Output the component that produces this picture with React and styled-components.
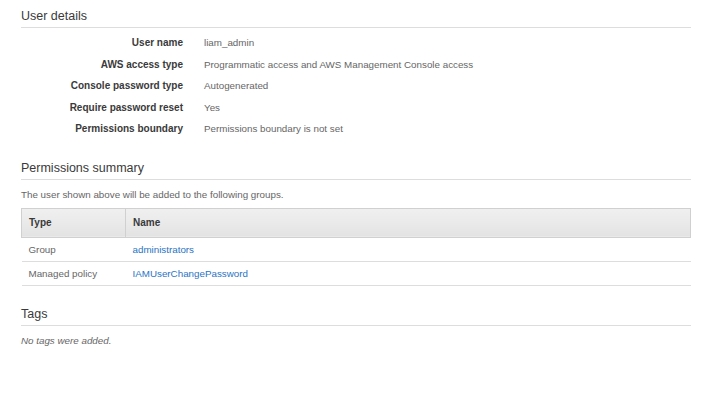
import React from 'react';
import styled, { createGlobalStyle } from 'styled-components';

const GlobalStyle = createGlobalStyle`
  body {
    margin: 0;
    background: #ffffff;
    font-family: 'Liberation Sans', Arial, sans-serif;
    color: #444;
  }
`;

const Page = styled.div`
  width: 670px;
  padding: 6px 0 0 21px;
`;

const Section = styled.section`
  margin-top: ${props => props.gap || 0}px;
`;

const Heading = styled.h2`
  margin: 0;
  font-size: 12.5px;
  font-weight: normal;
  line-height: 20px;
  color: #3a3a3a;
  padding-bottom: 1px;
  border-bottom: 1px solid #dddddd;
`;

const DetailList = styled.div`
  display: grid;
  grid-template-columns: 162px 1fr;
  column-gap: 21px;
  margin-top: 4px;
`;

const Label = styled.div`
  text-align: right;
  font-size: 10px;
  font-weight: bold;
  color: #3a3a3a;
  line-height: 21.5px;
`;

const Value = styled.div`
  font-size: 9.8px;
  color: #666;
  line-height: 21.5px;
`;

const Note = styled.p`
  margin: 7px 0 ${props => (props.italic ? 7 : 5)}px;
  font-size: 9.8px;
  line-height: 16px;
  color: #666;
  font-style: ${props => (props.italic ? 'italic' : 'normal')};
`;

const Table = styled.table`
  width: 100%;
  border-collapse: collapse;
  font-size: 9.8px;
`;

const HeadCell = styled.th`
  text-align: left;
  font-weight: bold;
  font-size: 10px;
  color: #3a3a3a;
  height: 28px;
  padding: 0 7px;
  width: ${props => props.w || 'auto'};
  background: linear-gradient(#f0f0f0, #e3e3e3);
  border: 1px solid #d0d0d0;
`;

const Cell = styled.td`
  height: 23px;
  padding: 0 7px;
  color: #666;
  border-bottom: 1px solid #dddddd;
`;

const Link = styled.a`
  color: #2a74c4;
  text-decoration: none;
`;

const details = [
  ['User name', 'liam_admin'],
  ['AWS access type', 'Programmatic access and AWS Management Console access'],
  ['Console password type', 'Autogenerated'],
  ['Require password reset', 'Yes'],
  ['Permissions boundary', 'Permissions boundary is not set'],
];

const permissions = [
  ['Group', 'administrators'],
  ['Managed policy', 'IAMUserChangePassword'],
];

export default function App() {
  return (
    <Page>
      <GlobalStyle />
      <Section>
        <Heading>User details</Heading>
        <DetailList>
          {details.map(([label, value]) => (
            <React.Fragment key={label}>
              <Label>{label}</Label>
              <Value>{value}</Value>
            </React.Fragment>
          ))}
        </DetailList>
      </Section>

      <Section gap={18}>
        <Heading>Permissions summary</Heading>
        <Note>The user shown above will be added to the following groups.</Note>
        <Table>
          <thead>
            <tr>
              <HeadCell w="89px">Type</HeadCell>
              <HeadCell>Name</HeadCell>
            </tr>
          </thead>
          <tbody>
            {permissions.map(([type, name]) => (
              <tr key={name}>
                <Cell>{type}</Cell>
                <Cell>
                  <Link href="#">{name}</Link>
                </Cell>
              </tr>
            ))}
          </tbody>
        </Table>
      </Section>

      <Section gap={18}>
        <Heading>Tags</Heading>
        <Note italic>No tags were added.</Note>
      </Section>
    </Page>
  );
}
